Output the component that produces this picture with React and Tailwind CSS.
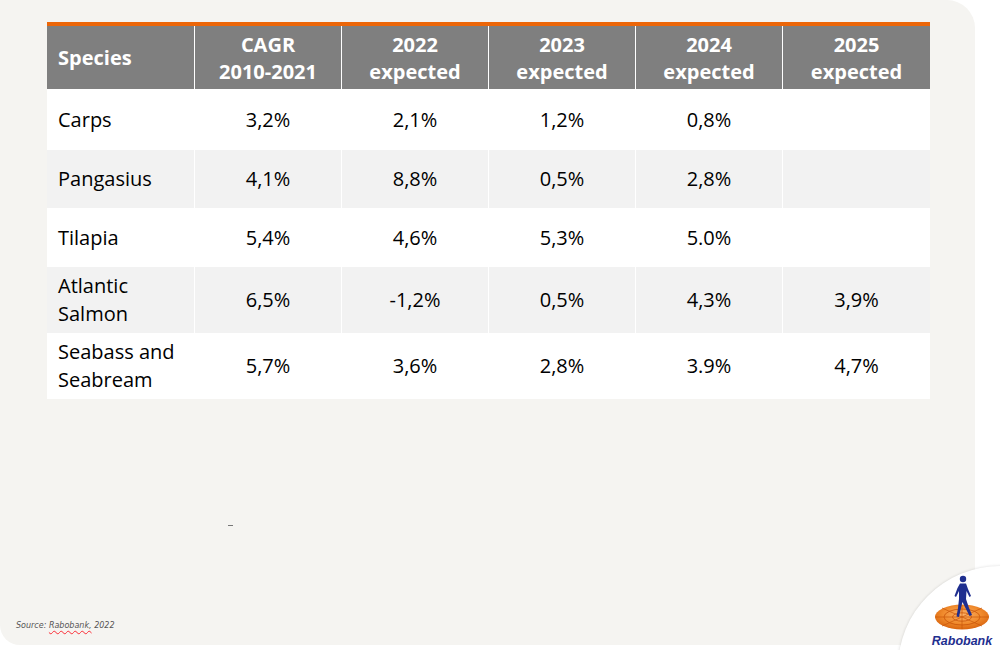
import React from "react";

const rows = [
  { name: ["Carps"], vals: ["3,2%", "2,1%", "1,2%", "0,8%", ""], h: "h-[61px]", bg: "bg-white" },
  { name: ["Pangasius"], vals: ["4,1%", "8,8%", "0,5%", "2,8%", ""], h: "h-[58px]", bg: "bg-[#f2f2f2]" },
  { name: ["Tilapia"], vals: ["5,4%", "4,6%", "5,3%", "5.0%", ""], h: "h-[59px]", bg: "bg-white" },
  { name: ["Atlantic", "Salmon"], vals: ["6,5%", "-1,2%", "0,5%", "4,3%", "3,9%"], h: "h-[66px]", bg: "bg-[#f2f2f2]" },
  { name: ["Seabass and", "Seabream"], vals: ["5,7%", "3,6%", "2,8%", "3.9%", "4,7%"], h: "h-[66px]", bg: "bg-white" },
];

const headers = [
  ["CAGR", "2010-2021"],
  ["2022", "expected"],
  ["2023", "expected"],
  ["2024", "expected"],
  ["2025", "expected"],
];

const RabobankLogo = () => (
  <div className="flex flex-col items-center">
    <svg width="64" height="56" viewBox="0 0 64 56">
      <defs>
        <radialGradient id="disc" cx="50%" cy="40%" r="60%">
          <stop offset="0%" stopColor="#fbb36b" />
          <stop offset="60%" stopColor="#f08a2c" />
          <stop offset="100%" stopColor="#d9650f" />
        </radialGradient>
      </defs>
      <ellipse cx="32" cy="42" rx="27" ry="12.5" fill="url(#disc)" />
      <ellipse cx="32" cy="42" rx="18" ry="8" fill="none" stroke="#c9560a" strokeWidth="0.8" />
      <ellipse cx="32" cy="42" rx="9.5" ry="4.2" fill="none" stroke="#c9560a" strokeWidth="0.8" />
      <g stroke="#c9560a" strokeWidth="0.7">
        <line x1="32" y1="42" x2="5" y2="42" />
        <line x1="32" y1="42" x2="59" y2="42" />
        <line x1="32" y1="42" x2="32" y2="30" />
        <line x1="32" y1="42" x2="32" y2="54" />
        <line x1="32" y1="42" x2="12" y2="33" />
        <line x1="32" y1="42" x2="52" y2="51" />
        <line x1="32" y1="42" x2="52" y2="33" />
        <line x1="32" y1="42" x2="12" y2="51" />
      </g>
      <g fill="#1f2f8f">
        <circle cx="33" cy="4" r="3.2" />
        <path d="M30 8.5 L36 8.5 L38 14 L41 21 L39.5 22 L36.5 16 L36 24 L39 33 L42 40 L39.5 41 L35.5 33 L32.5 27 L30.5 35 L29 42 L26.5 41.5 L28 33 L29 24 L29 16 L26 22 L24.5 21 L27.5 13 Z" />
      </g>
    </svg>
    <span className="mt-[4px] font-['Liberation_Sans',Arial,sans-serif] text-[12.5px] font-bold italic leading-none text-[#1f2f8f]">
      Rabobank
    </span>
  </div>
);

export default function App() {
  return (
    <div className="relative h-[650px] w-[1000px] overflow-hidden bg-white font-['Open_Sans',sans-serif]">
      <div className="relative flex h-[645px] w-[975px] flex-col rounded-tr-[28px] rounded-bl-[20px] bg-[#f5f4f1] pl-[47px] pt-[22px]">
        <div className="w-[883px]">
          <div className="h-[4px] bg-[#ec6608]" />
          <div className="grid grid-cols-[147px_146px_146px_146px_146px_147px] gap-x-[1px] bg-white">
            <div className="flex h-[63px] items-center bg-[#7f7f7f] pl-[11px] text-[20px] font-bold text-white">
              Species
            </div>
            {headers.map((h, i) => (
              <div
                key={i}
                className="flex h-[63px] flex-col items-center justify-center bg-[#7f7f7f] text-[20px] font-bold leading-[27px] text-white"
              >
                <span>{h[0]}</span>
                <span>{h[1]}</span>
              </div>
            ))}
            {rows.map((r, ri) => (
              <React.Fragment key={ri}>
                <div
                  className={`flex flex-col justify-center pl-[11px] text-[20px] leading-[28px] text-black ${r.h} ${r.bg}`}
                >
                  {r.name.map((n) => (
                    <span key={n}>{n}</span>
                  ))}
                </div>
                {r.vals.map((v, vi) => (
                  <div
                    key={vi}
                    className={`flex items-center justify-center text-[20px] text-black ${r.h} ${r.bg}`}
                  >
                    {v}
                  </div>
                ))}
              </React.Fragment>
            ))}
          </div>
        </div>

        <div className="ml-[181px] mt-[126px] h-[1px] w-[5px] bg-[#777]" />

        <div className="mt-auto mb-[13px] -ml-[31px] font-['DejaVu_Sans',sans-serif] text-[8px] italic text-[#555]">
          Source:{" "}
          <span className="underline decoration-red-500 decoration-wavy decoration-[1px] underline-offset-2">
            Rabobank,
          </span>{" "}
          2022
        </div>
      </div>

      <div className="absolute left-[898px] top-[566px] h-[204px] w-[204px] rounded-full bg-white shadow-[0_0_3px_rgba(0,0,0,0.15)]" />
      <div className="absolute left-[930px] top-[575px]">
        <RabobankLogo />
      </div>
    </div>
  );
}
